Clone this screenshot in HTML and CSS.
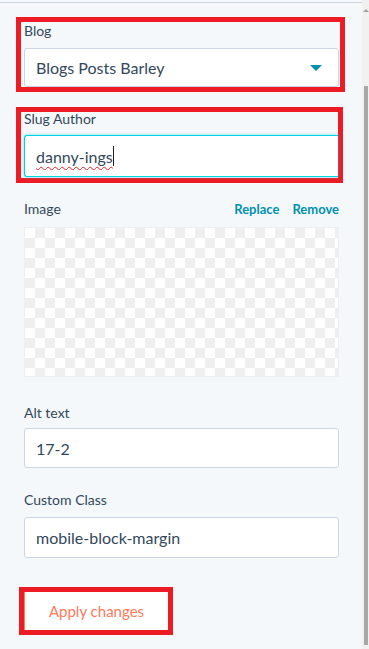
FILE: index.html
```html
<!DOCTYPE html>
<html lang="en">
<head>
<meta charset="utf-8">
<title>Module settings</title>
<link rel="stylesheet" href="styles.css">
</head>
<body>
<div class="page">
  <div class="panel">
    <div class="annot annot-blog">
      <div class="field-label">Blog</div>
      <div class="select">
        <span class="select-value">Blogs Posts Barley</span>
        <span class="caret"></span>
      </div>
    </div>

    <div class="annot annot-slug">
      <div class="field-label">Slug Author</div>
      <div class="input input-focus"><span class="typed">danny-ings</span><span class="cursor"></span></div>
    </div>

    <div class="field field-image">
      <div class="label-row">
        <span class="field-label">Image</span>
        <span class="links"><a class="link">Replace</a><a class="link">Remove</a></span>
      </div>
      <div class="checker"></div>
    </div>

    <div class="field">
      <div class="field-label">Alt text</div>
      <div class="input">17-2</div>
    </div>

    <div class="field field-class">
      <div class="field-label">Custom Class</div>
      <div class="input">mobile-block-margin</div>
    </div>

    <div class="annot annot-btn">
      <button class="apply">Apply changes</button>
    </div>
  </div>
  <div class="scrollbar">
    <div class="scroll-arrow"></div>
    <div class="scroll-thumb"></div>
  </div>
</div>
</body>
</html>
```

FILE: styles.css
```css
* { box-sizing: border-box; }
html, body { margin: 0; padding: 0; }
body {
  background: #f5f8fa;
  font-family: Lato, "Open Sans", sans-serif;
  color: #33475b;
  width: 369px;
  height: 649px;
  overflow: hidden;
}
.page {
  display: flex;
  height: 649px;
}
.panel {
  flex: 1;
  margin-top: 2px;
  border-top: 1px solid #cbd6e2;
  padding: 14px 23px 0 24px;
  display: flex;
  flex-direction: column;
}
.field-label {
  font-size: 14px;
  line-height: 20px;
  color: #33475b;
}
.annot {
  border: 5px solid #ed1c24;
}
.annot-blog {
  margin: 0 -6px 0 -8px;
  padding: 0 1px 0 3px;
}
.annot-blog .field-label { line-height: 18px; margin-bottom: 8px; }
.annot-slug {
  margin: 15px -4px 0 -8px;
  padding: 0 0 1px 3px;
}
.annot-slug .field-label { line-height: 14px; margin-bottom: 9px; }
.select, .input {
  height: 40px;
  background: #fff;
  border: 1px solid #cbd6e2;
  border-radius: 3px;
  font-size: 16px;
  padding: 0 11px;
  display: flex;
  align-items: center;
}
.select { justify-content: space-between; height: 39px; }
.caret {
  width: 0; height: 0;
  border-left: 6px solid transparent;
  border-right: 6px solid transparent;
  border-top: 6px solid #0091ae;
  margin-right: 5px;
}
.input-focus {
  height: 42px;
  border: 1px solid #00d0e4;
  box-shadow: 0 0 3px 0 rgba(0, 208, 228, 0.6);
  border-right: none;
  border-radius: 3px 0 0 3px;
}
.typed {
  text-decoration: underline wavy #e0242b;
  text-decoration-thickness: 1px;
  text-underline-offset: 3px;
}
.cursor {
  display: inline-block;
  width: 1px;
  height: 20px;
  background: #222;
}
.field { margin-top: 22px; }
.field-image { margin-top: 16px; }
.label-row {
  display: flex;
  justify-content: space-between;
  align-items: baseline;
  margin-bottom: 3px;
}
.links { display: flex; gap: 13px; }
.link {
  font-size: 13px;
  font-weight: 700;
  color: #0091ae;
  cursor: pointer;
}
.checker {
  height: 150px;
  border: 1px solid #eaf0f6;
  background-color: #fff;
  background-image:
    linear-gradient(45deg, #efefef 25%, transparent 25%, transparent 75%, #efefef 75%),
    linear-gradient(45deg, #efefef 25%, transparent 25%, transparent 75%, #efefef 75%);
  background-size: 20px 20px;
  background-position: 0 0, 10px 10px;
}
.field .field-label { margin-bottom: 5px; }
.field-image + .field { margin-top: 26px; }
.field-class .field-label { margin-bottom: 7px; }
.field-class .input { height: 41px; }
.annot-btn {
  align-self: flex-start;
  margin: 29px 0 0 -5px;
  padding: 0;
  display: flex;
}
.apply {
  width: 144px;
  height: 38px;
  background: #fff;
  border: none;
  border-left: 1px solid #ff7a59;
  color: #ff7a59;
  font-family: Lato, "Open Sans", sans-serif;
  font-size: 15px;
  padding: 0;
}
.scrollbar {
  width: 7px;
  background: #f1f1f1;
  display: flex;
  flex-direction: column;
  align-items: center;
}
.scroll-arrow {
  width: 0; height: 0;
  margin-top: 9px;
  border-left: 3px solid transparent;
  border-right: 3px solid transparent;
  border-bottom: 3px solid #a3a3a3;
}
.scroll-thumb {
  width: 4px;
  margin-top: 74px;
  height: 559px;
  background: #a8a8a8;
}
```
